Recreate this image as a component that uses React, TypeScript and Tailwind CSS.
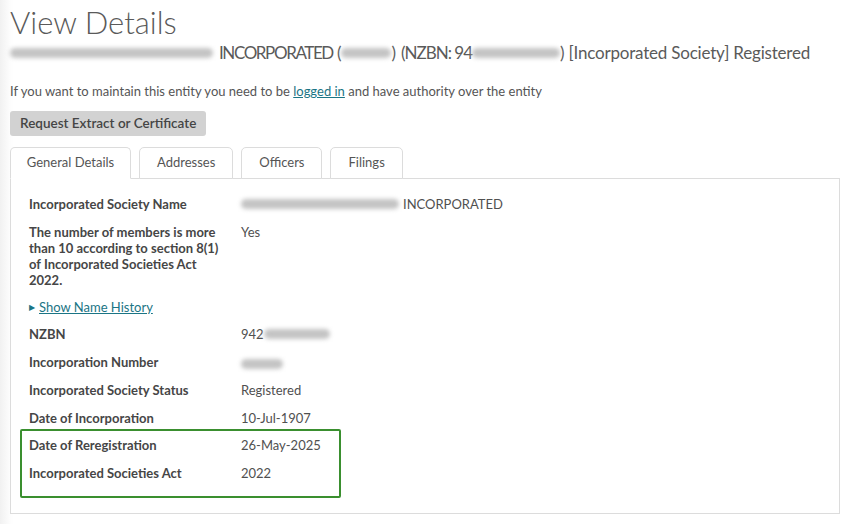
const font = { fontFamily: '"Lato", "Noto Sans", sans-serif' };

function Blur({ w }: { w: number }) {
  return (
    <span
      className="inline-block h-[10px] shrink-0 rounded-full bg-[#c4c4c4] blur-[2px] align-middle"
      style={{ width: w }}
    />
  );
}

const TABS = ["General Details", "Addresses", "Officers", "Filings"];

function Row({ label, children }: { label: React.ReactNode; children: React.ReactNode }) {
  return (
    <div className="flex py-[6px]">
      <div className="w-[212px] shrink-0 pr-4 text-[13px] font-bold leading-4 text-[#464646]">{label}</div>
      <div className="text-[13px] leading-4 text-[#505050]">{children}</div>
    </div>
  );
}

export default function App() {
  return (
    <div
      className="min-h-[524px] bg-[linear-gradient(90deg,#f1f1f1_0px,#fdfdfd_10px,#fff_14px)] px-[10px] pt-[3px]"
      style={font}
    >
      <h1 className="text-[31px] font-light leading-[38px] text-[#5a5a5a]">View Details</h1>
      <div className="flex items-center whitespace-nowrap text-[17px] leading-6 text-[#5a5a5a]">
        <Blur w={203} />
        <span className="ml-[6px] tracking-[-1.4px]">INCORPORATED</span>
        <span className="ml-[4px]">(</span>
        <Blur w={50} />
        <span>)</span>
        <span className="ml-[5px] tracking-[-1px]">(NZBN: 94</span>
        <Blur w={88} />
        <span className="tracking-[-0.2px]">) [Incorporated Society] Registered</span>
      </div>
      <p className="mt-[16px] text-[13px] leading-5 text-[#555]">
        If you want to maintain this entity you need to be{" "}
        <a className="text-[#1b7585] underline">logged in</a> and have authority over the entity
      </p>
      <button className="mt-[10px] h-[25px] rounded-[3px] bg-[#d2d2d2] px-[10px] text-[13.5px] font-semibold text-[#454545]">
        Request Extract or Certificate
      </button>

      <div className="mt-[11px] flex gap-2">
        {TABS.map((t, i) => (
          <div
            key={t}
            className={
              "relative z-10 flex h-[32px] items-center justify-center rounded-t-[5px] border border-[#dcdcdc] bg-white text-[13px] text-[#555] " +
              (i === 0 ? "w-[121px] border-b-white" : "w-auto px-[17px] h-[31px]")
            }
          >
            {t}
          </div>
        ))}
      </div>
      <div className="-mt-px h-[336px] w-[830px] border border-[#dcdcdc] bg-white pl-[18px] pt-[11px]">
        <Row label="Incorporated Society Name">
          <span className="flex items-center">
            <Blur w={158} />
            <span className="ml-1">INCORPORATED</span>
          </span>
        </Row>
        <Row label="The number of members is more than 10 according to section 8(1) of Incorporated Societies Act 2022.">
          Yes
        </Row>
        <div className="flex items-center py-[5px] text-[13px] leading-4">
          <span className="mr-1 text-[8px] text-[#1b7585]">▶</span>
          <a className="text-[#1b7585] underline">Show Name History</a>
        </div>
        <Row label="NZBN">
          <span className="flex items-center">
            942
            <Blur w={66} />
          </span>
        </Row>
        <Row label="Incorporation Number">
          <Blur w={42} />
        </Row>
        <Row label="Incorporated Society Status">Registered</Row>
        <Row label="Date of Incorporation">10-Jul-1907</Row>
        <div className="-ml-[9px] -mt-[3px] w-[321px] rounded-[2px] border-2 border-[#3a8f2f] pb-[9px] pl-[7px]">
          <Row label="Date of Reregistration">26-May-2025</Row>
          <Row label="Incorporated Societies Act">2022</Row>
        </div>
      </div>
    </div>
  );
}
